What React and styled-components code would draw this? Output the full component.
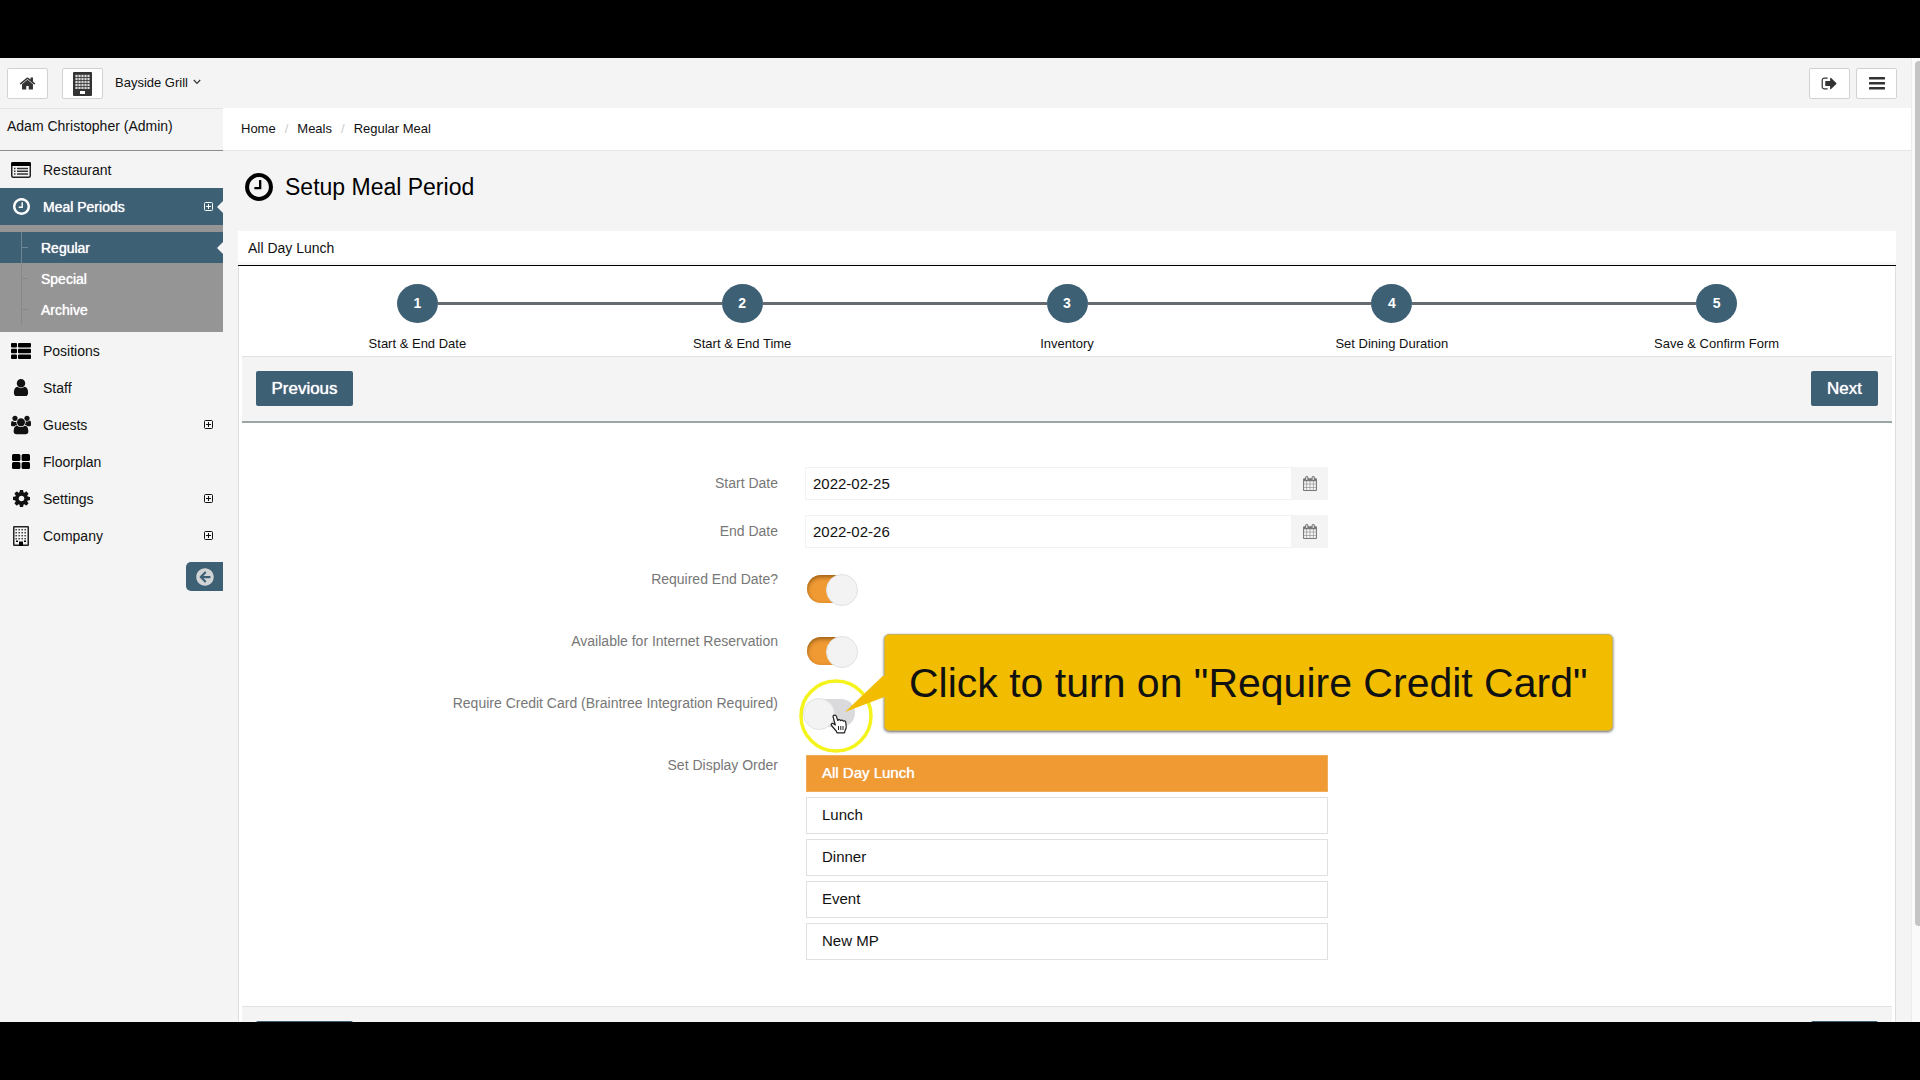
import { useState } from 'react'
import styled, { createGlobalStyle, css } from 'styled-components'
import { FaArrowCircleLeft } from 'react-icons/fa'

const steel = '#3e6075'
const orange = '#ef9a33'
const page = '#f4f4f4'

const GlobalStyle = createGlobalStyle`
  * {
    box-sizing: border-box;
  }
  body {
    margin: 0;
    background: #000;
    color: #111;
    font-family: 'Liberation Sans', Arial, sans-serif;
    font-size: 14px;
    line-height: 18px;
  }
  a {
    color: inherit;
    text-decoration: none;
  }
  button, input {
    font-family: inherit;
    color: inherit;
  }
  ul, ol {
    list-style: none;
    margin: 0;
    padding: 0;
  }
  svg {
    display: block;
    flex: none;
  }
`

const Stage = styled.div`
  height: 100vh;
  padding: 58px 0;
`

const Viewport = styled.div`
  display: flex;
  height: 100%;
  overflow: hidden;
  background: ${page};
`

const Page = styled.div`
  flex: 1;
  min-width: 0;
`

const ScrollTrack = styled.div`
  width: 9px;
  padding: 3px 0 0 3px;
  background: #fafafa;
  border-left: 1px solid #ececec;
`

const ScrollThumb = styled.div`
  height: 90%;
  border-radius: 4px 0 0 4px;
  background: #c4c4c4;
`

/* top bar */
const TopBar = styled.header`
  display: flex;
  align-items: flex-start;
  height: 50px;
  padding: 10px 14px 0 7px;
`

const BarButton = styled.button`
  display: flex;
  align-items: center;
  justify-content: center;
  width: 41px;
  height: 31px;
  padding: 0;
  color: #333;
  background: #fff;
  border: 1px solid #d2d2d2;
  border-radius: 2px;
`

const BarLeft = styled.div`
  display: flex;
  flex: 1;
  gap: 14px;
`

const BarRight = styled.div`
  display: flex;
  gap: 6px;
`

const PlaceButton = styled.button`
  display: flex;
  align-items: center;
  gap: 5px;
  height: 28px;
  padding: 0;
  border: 0;
  background: none;
  font-size: 13px;
  margin-left: -2px;
`

const Body = styled.div`
  display: flex;
`

/* sidebar */
const Sidebar = styled.aside`
  width: 223px;
  flex: none;
`

const UserName = styled.div`
  height: 43px;
  padding: 8px 7px;
  border-top: 1px solid #e4e4e4;
  border-bottom: 1px solid #8c8c8c;
`

const notch = css`
  &::after {
    content: '';
    position: absolute;
    right: 0;
    top: 50%;
    margin-top: -6px;
    border: 6px solid transparent;
    border-left-width: 0;
    border-right-color: ${page};
  }
`

const NavLink = styled.a`
  position: relative;
  display: flex;
  align-items: center;
  gap: 12px;
  height: 37px;
  padding: 0 10px 0 11px;
  ${p => p.$active && css`
    color: #fff;
    background: ${steel};
    text-shadow: 0 0 1px #fff;
    ${notch}
  `}
`

const NavIcon = styled.span`
  display: flex;
  justify-content: center;
  width: 20px;
`

const NavText = styled.span`
  flex: 1;
`

const SubNav = styled.ul`
  padding: 7px 0;
  color: #fff;
  background: #959595;
`

const SubLink = styled.a`
  position: relative;
  display: flex;
  align-items: center;
  gap: 13px;
  height: 31px;
  padding-left: 21px;
  text-shadow: 0 0 1px #fff;
  ${p => p.$active && css`
    background: ${steel};
    ${notch}
  `}
`

const Branch = styled.span`
  display: flex;
  align-items: center;
  width: 7px;
  height: 31px;
  border-left: 1px solid ${p => (p.$active ? '#6f8795' : '#888')};
  &::before {
    content: '';
    width: 6px;
    height: 1px;
    background: ${p => (p.$active ? '#6f8795' : '#888')};
  }
`

const CollapseButton = styled.button`
  display: flex;
  align-items: center;
  justify-content: center;
  width: 37px;
  height: 29px;
  margin: 8px 0 0 auto;
  padding: 0;
  border: 0;
  border-radius: 5px 0 0 5px;
  color: #d2d4d6;
  background: ${steel};
`

/* content */
const Main = styled.main`
  flex: 1;
  min-width: 0;
`

const Breadcrumb = styled.nav`
  display: flex;
  gap: 9px;
  height: 43px;
  padding: 12px 18px;
  font-size: 13px;
  background: #fff;
  border-bottom: 1px solid #e6e6e6;
  span {
    color: #ccc;
  }
`

const Heading = styled.h1`
  display: flex;
  align-items: center;
  gap: 12px;
  height: 80px;
  margin: 0;
  padding: 0 22px 8px;
  font-size: 23px;
  font-weight: 400;
  color: #000;
`

const Panel = styled.section`
  margin: 0 15px;
`

const PanelTitle = styled.h2`
  height: 35px;
  margin: 0;
  padding: 8px 10px;
  font-size: 14px;
  font-weight: 400;
  background: linear-gradient(#fff 31px, #f7f7f7 31px);
  border-bottom: 1px solid #000;
`

const PanelBody = styled.div`
  padding: 0 3px;
  background: #fff;
  border: solid #dedede;
  border-width: 0 1px;
`

const Steps = styled.ol`
  display: flex;
  padding: 18px 13px 3px;
`

const Step = styled.li`
  flex: 1;
  text-align: center;
  font-size: 13px;
`

const StepTrack = styled.div`
  display: flex;
  align-items: center;
  margin-bottom: 12px;
`

const StepLine = styled.span`
  flex: 1;
  height: 3px;
  background: ${p => (p.$hidden ? 'transparent' : '#666b72')};
`

const StepDot = styled.span`
  width: 41px;
  height: 39px;
  line-height: 39px;
  border-radius: 50%;
  color: #fff;
  background: ${steel};
  font-size: 14px;
  font-weight: 700;
`

const Actions = styled.div`
  display: flex;
  justify-content: space-between;
  padding: 14px;
  background: ${page};
  border-top: 1px solid #e2e2e2;
  border-bottom: 2px solid #9aa6a6;
`

const ActionButton = styled.button`
  min-width: ${p => (p.$wide ? '97px' : '67px')};
  height: 35px;
  margin-bottom: 1px;
  padding: 0 15px;
  border: 0;
  border-radius: 2px;
  color: #fff;
  background: ${steel};
  font-size: 17px;
  text-shadow: 0 0 1px #fff;
`

const Form = styled.form`
  padding: 44px 0 46px;
`

const Row = styled.div`
  display: grid;
  grid-template-columns: 1fr 1fr 1fr;
  min-height: ${p => (p.$tall ? '62px' : '48px')};
`

const Label = styled.label`
  padding: 7px 14px 0 0;
  text-align: right;
  color: #777;
`

const DateField = styled.div`
  display: flex;
  height: 33px;
  margin: 0 14px 0 13px;
`

const DateInput = styled.input`
  flex: 1;
  min-width: 0;
  padding: 0 7px;
  border: 1px solid #f3f3f3;
  background: #fff;
  font-size: 15px;
`

const DateButton = styled.button`
  display: flex;
  align-items: center;
  justify-content: center;
  width: 36px;
  padding: 0;
  border: 0;
  color: #777;
  background: ${page};
`

const SwitchCell = styled.div`
  padding: 12px 0 0 15px;
`

const SwitchAnchor = styled.div`
  position: relative;
  width: 50px;
  height: 28px;
`

const Switch = styled.input.attrs({ type: 'checkbox' })`
  appearance: none;
  display: block;
  width: 48px;
  height: 28px;
  margin: 0;
  border-radius: 14px;
  background: #dadadc;
  &:checked {
    background: ${orange};
    box-shadow: inset 0 2px 4px rgba(90, 50, 0, 0.6);
  }
  &::before {
    content: '';
    position: absolute;
    top: -1px;
    left: -4px;
    width: 30px;
    height: 30px;
    border: 1px solid #e2e2e2;
    border-radius: 50%;
    background: #f3f3f3;
  }
  &:checked::before {
    left: 19px;
  }
`

const OrderList = styled.ul`
  display: flex;
  flex-direction: column;
  gap: 5px;
  padding: 6px 14px 0 14px;
`

const OrderItem = styled.li`
  height: 37px;
  padding: 8px 15px;
  font-size: 15px;
  border: 1px solid #e0e0e0;
  background: #fff;
  ${p => p.$active && css`
    color: #fff;
    background: ${orange};
    border-color: #f0ac5a;
    text-shadow: 0 0 1px #fff;
  `}
`

/* hint shown over the form */
const Callout = styled.div`
  position: absolute;
  z-index: 2;
  top: -65px;
  left: 77px;
  height: 97px;
  padding: 0 24px;
  line-height: 97px;
  white-space: nowrap;
  font-size: 41px;
  color: #111;
  background: #f2bd00;
  border: 1px solid #c9b25a;
  border-radius: 5px;
  box-shadow: 0 1px 3px rgba(0, 0, 0, 0.6);
`

const Pointer = styled.svg`
  position: absolute;
  z-index: 3;
  top: -23px;
  left: -10px;
  pointer-events: none;
`

const Fa = ({ d, size, box = '0 0 1792 1792', width }) => (
  <svg viewBox={box} width={width || size} height={size} fill="currentColor" aria-hidden="true"><path d={d} /></svg>
)

const homePath = 'M1472 992v480q0 26-19 45t-45 19h-384v-384h-256v384h-384q-26 0-45-19t-19-45v-480q0-1 .5-3t.5-3l575-474 575 474q1 2 1 6zm223-69l-62 74q-8 9-21 11h-3q-13 0-21-7l-692-577-692 577q-12 8-24 7-13-2-21-11l-62-74q-8-10-7-23.5t11-21.5l719-599q32-26 76-26t76 26l244 204v-195q0-14 9-23t23-9h192q14 0 23 9t9 23v408l219 182q10 8 11 21.5t-7 23.5z'
const signOutPath = 'M704 1440q0 4 1 20t.5 26.5-3 23.5-10 19.5-20.5 6.5h-320q-119 0-203.5-84.5t-84.5-203.5v-704q0-119 84.5-203.5t203.5-84.5h320q13 0 22.5 9.5t9.5 22.5q0 4 1 20t.5 26.5-3 23.5-10 19.5-20.5 6.5h-320q-66 0-113 47t-47 113v704q0 66 47 113t113 47h312l11.5 1 11.5 3 8 5.5 7 9 2 13.5zm928-544q0 26-19 45l-544 544q-19 19-45 19t-45-19-19-45v-288h-448q-26 0-45-19t-19-45v-384q0-26 19-45t45-19h448v-288q0-26 19-45t45-19 45 19l544 544q19 19 19 45z'
const clockPath = 'M1024 544v448q0 14-9 23t-23 9h-320q-14 0-23-9t-9-23v-64q0-14 9-23t23-9h224v-352q0-14 9-23t23-9h64q14 0 23 9t9 23zm416 352q0-148-73-273t-198-198-273-73-273 73-198 198-73 273 73 273 198 198 273 73 273-73 198-198 73-273zm224 0q0 209-103 385.5t-279.5 279.5-385.5 103-385.5-103-279.5-279.5-103-385.5 103-385.5 279.5-279.5 385.5-103 385.5 103 279.5 279.5 103 385.5z'
const userPath = 'M1536 1399q0 109-62.5 187t-150.5 78h-854q-88 0-150.5-78t-62.5-187q0-85 8.5-160.5t31.5-152 58.5-131 94-89 134.5-34.5q131 128 313 128t313-128q76 0 134.5 34.5t94 89 58.5 131 31.5 152 8.5 160.5zm-256-887q0 159-112.5 271.5t-271.5 112.5-271.5-112.5-112.5-271.5 112.5-271.5 271.5-112.5 271.5 112.5 112.5 271.5z'
const usersPath = 'M657 896q-162 5-265 128h-134q-82 0-138-40.5t-56-118.5q0-353 124-353 6 0 43.5 21t97.5 42.5 119 21.5q67 0 133-23-5 37-5 66 0 159 90 294zm1071 637q0 120-73 189.5t-194 69.5h-874q-121 0-194-69.5t-73-189.5q0-53 3.5-103.5t14-109 26.5-108.5 43-97.5 62-81 85.5-53.5 111.5-20q10 0 43 21.5t73 48 107 48 135 21.5 135-21.5 107-48 73-48 43-21.5q61 0 111.5 20t85.5 53.5 62 81 43 97.5 26.5 108.5 14 109 3.5 103.5zm-1024-1277q0 106-75 181t-181 75-181-75-75-181 75-181 181-75 181 75 75 181zm704 384q0 159-112.5 271.5t-271.5 112.5-271.5-112.5-112.5-271.5 112.5-271.5 271.5-112.5 271.5 112.5 112.5 271.5zm576 225q0 78-56 118.5t-138 40.5h-134q-103-123-265-128 90-135 90-294 0-29-5-66 66 23 133 23 59 0 119-21.5t97.5-42.5 43.5-21q124 0 124 353zm-128-609q0 106-75 181t-181 75-181-75-75-181 75-181 181-75 181 75 75 181z'
const cogPath = 'M1152 896q0-106-75-181t-181-75-181 75-75 181 75 181 181 75 181-75 75-181zm512-109v222q0 12-8 23t-20 13l-185 28q-19 54-39 91 35 50 107 138 10 12 10 25t-9 23q-27 37-99 108t-94 71q-12 0-26-9l-138-108q-44 23-91 38-16 136-29 186-7 28-36 28h-222q-14 0-24.5-8.5t-11.5-21.5l-28-184q-49-16-90-37l-141 107q-10 9-25 9-14 0-25-11-126-114-165-168-7-10-7-23 0-12 8-23 15-21 51-66.5t54-70.5q-27-50-41-99l-183-27q-13-2-21-12.5t-8-23.5v-222q0-12 8-23t19-13l186-28q14-46 39-92-40-57-107-138-10-12-10-24 0-10 9-23 26-36 98.5-107.5t94.5-71.5q13 0 26 10l138 107q44-23 91-38 16-136 29-186 7-28 36-28h222q14 0 24.5 8.5t11.5 21.5l28 184q49 16 90 37l142-107q9-9 24-9 13 0 25 10 129 119 165 170 7 8 7 22 0 12-8 23-15 21-51 66.5t-54 70.5q26 50 41 98l183 28q13 2 21 12.5t8 23.5z'
const calendarPath = 'M192 1664h288v-288h-288v288zm352 0h320v-288h-320v288zm-352-352h288v-320h-288v320zm352 0h320v-320h-320v320zm-352-384h288v-288h-288v288zm736 736h320v-288h-320v288zm-384-736h320v-288h-320v288zm768 736h288v-288h-288v288zm-384-352h320v-320h-320v320zm-352-864v-288q0-13-9.5-22.5t-22.5-9.5h-64q-13 0-22.5 9.5t-9.5 22.5v288q0 13 9.5 22.5t22.5 9.5h64q13 0 22.5-9.5t9.5-22.5zm736 864h288v-320h-288v320zm-384-384h320v-288h-320v288zm384 0h288v-288h-288v288zm32-480v-288q0-13-9.5-22.5t-22.5-9.5h-64q-13 0-22.5 9.5t-9.5 22.5v288q0 13 9.5 22.5t22.5 9.5h64q13 0 22.5-9.5t9.5-22.5zm384-64v1280q0 52-38 90t-90 38h-1408q-52 0-90-38t-38-90v-1280q0-52 38-90t90-38h128v-96q0-66 47-113t113-47h64q66 0 113 47t47 113v96h384v-96q0-66 47-113t113-47h64q66 0 113 47t47 113v96h128q52 0 90 38t38 90z'

const ClockIcon = ({ size }) => <Fa d={clockPath} size={size} box="128 128 1536 1536" />

const BarsIcon = () => (
  <svg width="16" height="14" viewBox="0 0 16 14" fill="currentColor" aria-hidden="true">
    <rect y="0" width="16" height="2.4" rx="0.5" />
    <rect y="5" width="16" height="2.4" rx="0.5" />
    <rect y="10" width="16" height="2.4" rx="0.5" />
  </svg>
)

const ListAltIcon = () => (
  <svg width="20" height="16" viewBox="0 0 20 16" aria-hidden="true">
    <rect x="0.75" y="0.75" width="18.5" height="14.5" rx="1.5" fill="none" stroke="#222" strokeWidth="1.5" />
    <path d="M0 1.5Q0 0 1.5 0h17Q20 0 20 1.5V4H0z" fill="#000" />
    <path d="M3 6.5h1.5M3 9.2h1.5M3 12h1.5M6 6.5h11M6 9.2h11M6 12h11" stroke="#333" strokeWidth="1.5" />
  </svg>
)

const ThListIcon = () => (
  <svg width="20" height="16" viewBox="0 0 20 16" aria-hidden="true">
    {[0, 5.7, 11.4].map(y => (
      <g key={y}>
        <rect y={y} width="6" height="4.6" rx="1" />
        <rect x="7" y={y} width="13" height="4.6" rx="1" />
      </g>
    ))}
  </svg>
)

const ThLargeIcon = () => (
  <svg width="18" height="15" viewBox="0 0 18 15" aria-hidden="true">
    <rect width="8.4" height="7" rx="1.5" />
    <rect x="9.6" width="8.4" height="7" rx="1.5" />
    <rect y="8" width="8.4" height="7" rx="1.5" />
    <rect x="9.6" y="8" width="8.4" height="7" rx="1.5" />
  </svg>
)

const windows = [3, 6, 9, 12]

const BuildingSolid = () => (
  <svg width="19" height="24" viewBox="0 0 19 24" aria-hidden="true">
    <rect width="19" height="24" rx="1" fill="#333" />
    {[3, 6, 9, 12, 15].map(y => [3, 6, 9, 12, 15].map(x => (
      <rect key={`${x}-${y}`} x={x - 0.6} y={y - 0.2} width="2.2" height="2.2" fill="#d8d8d8" />
    )))}
    <rect x="7" y="19" width="5" height="3" fill="#fff" />
  </svg>
)

const BuildingOutline = () => (
  <svg width="16" height="20" viewBox="0 0 16 20" aria-hidden="true">
    <rect x="0.75" y="0.75" width="14.5" height="18.5" rx="0.5" fill="none" stroke="#222" strokeWidth="1.5" />
    {[3, 6, 9, 12].map(y => windows.map(x => (
      <rect key={`${x}-${y}`} x={x - 0.6} y={y} width="1.6" height="1.4" fill="#444" />
    )))}
    <path d="M3 14.5h2v1.5H3zM11 14.5h2v1.5h-2zM6 15.5h4V20H6z" />
  </svg>
)

const PlusSquare = () => (
  <svg width="9" height="9" viewBox="0 0 9 9" fill="none" stroke="currentColor" aria-hidden="true">
    <rect x="0.5" y="0.5" width="8" height="8" rx="1" />
    <path d="M4.5 2v5M2 4.5h5" />
  </svg>
)

const Chevron = () => (
  <svg width="8" height="6" viewBox="0 0 8 6" fill="none" stroke="#333" strokeWidth="1.2" aria-hidden="true">
    <path d="M0.8 1L4 4.4L7.2 1" />
  </svg>
)

const topItems = [
  { text: 'Restaurant', icon: <ListAltIcon /> },
  { text: 'Meal Periods', icon: <ClockIcon size={17} />, more: true, active: true },
]

const subItems = ['Regular', 'Special', 'Archive']

const bottomItems = [
  { text: 'Positions', icon: <ThListIcon /> },
  { text: 'Staff', icon: <Fa d={userPath} size={17} width={16} box="256 128 1280 1536" /> },
  { text: 'Guests', icon: <Fa d={usersPath} size={20} width={20} box="64 0 1920 1792" />, more: true },
  { text: 'Floorplan', icon: <ThLargeIcon /> },
  { text: 'Settings', icon: <Fa d={cogPath} size={17} box="128 128 1536 1536" />, more: true },
  { text: 'Company', icon: <BuildingOutline />, more: true },
]

const steps = ['Start & End Date', 'Start & End Time', 'Inventory', 'Set Dining Duration', 'Save & Confirm Form']
const order = ['All Day Lunch', 'Lunch', 'Dinner', 'Event', 'New MP']

const NavItem = ({ item }) => (
  <li>
    <NavLink href="#" $active={item.active}>
      <NavIcon>{item.icon}</NavIcon>
      <NavText>{item.text}</NavText>
      {item.more && <PlusSquare />}
    </NavLink>
  </li>
)

const DateRow = ({ id, label, value }) => (
  <Row>
    <Label htmlFor={id}>{label}</Label>
    <DateField>
      <DateInput id={id} type="text" defaultValue={value} />
      <DateButton type="button" aria-label={`Pick ${label}`}>
        <Fa d={calendarPath} size={15} width={14} box="64 0 1664 1792" />
      </DateButton>
    </DateField>
  </Row>
)

const SwitchRow = ({ id, label, initial, children }) => {
  const [on, setOn] = useState(initial)
  return (
    <Row $tall>
      <Label htmlFor={id}>{label}</Label>
      <SwitchCell>
        <SwitchAnchor>
          <Switch id={id} checked={on} onChange={() => setOn(!on)} />
          {children}
        </SwitchAnchor>
      </SwitchCell>
    </Row>
  )
}

export default function App() {
  return (
    <Stage>
      <GlobalStyle />
      <Viewport>
        <Page>
          <TopBar>
            <BarLeft>
              <BarButton aria-label="Home"><Fa d={homePath} size={17} /></BarButton>
              <BarButton aria-label="Building"><BuildingSolid /></BarButton>
              <PlaceButton>Bayside Grill <Chevron /></PlaceButton>
            </BarLeft>
            <BarRight>
              <BarButton aria-label="Sign out"><Fa d={signOutPath} size={17} /></BarButton>
              <BarButton aria-label="Menu"><BarsIcon /></BarButton>
            </BarRight>
          </TopBar>
          <Body>
            <Sidebar>
              <UserName>Adam Christopher (Admin)</UserName>
              <ul>{topItems.map(item => <NavItem key={item.text} item={item} />)}</ul>
              <SubNav>
                {subItems.map((text, i) => (
                  <li key={text}>
                    <SubLink href="#" $active={i === 0}><Branch $active={i === 0} />{text}</SubLink>
                  </li>
                ))}
              </SubNav>
              <ul>{bottomItems.map(item => <NavItem key={item.text} item={item} />)}</ul>
              <CollapseButton aria-label="Collapse menu"><FaArrowCircleLeft size={18} /></CollapseButton>
            </Sidebar>
            <Main>
              <Breadcrumb>
                <a href="#">Home</a><span>/</span>
                <a href="#">Meals</a><span>/</span>
                <a href="#">Regular Meal</a>
              </Breadcrumb>
              <Heading><ClockIcon size={28} />Setup Meal Period</Heading>
              <Panel>
                <PanelTitle>All Day Lunch</PanelTitle>
                <PanelBody>
                  <Steps>
                    {steps.map((text, i) => (
                      <Step key={text}>
                        <StepTrack>
                          <StepLine $hidden={i === 0} />
                          <StepDot>{i + 1}</StepDot>
                          <StepLine $hidden={i === steps.length - 1} />
                        </StepTrack>
                        {text}
                      </Step>
                    ))}
                  </Steps>
                  <Actions>
                    <ActionButton type="button" $wide>Previous</ActionButton>
                    <ActionButton type="button">Next</ActionButton>
                  </Actions>
                  <Form>
                    <DateRow id="start" label="Start Date" value="2022-02-25" />
                    <DateRow id="end" label="End Date" value="2022-02-26" />
                    <SwitchRow id="need-end" label="Required End Date?" initial={true} />
                    <SwitchRow id="internet" label="Available for Internet Reservation" initial={true} />
                    <SwitchRow id="card" label="Require Credit Card (Braintree Integration Required)" initial={false}>
                      <Callout role="tooltip">Click to turn on "Require Credit Card"</Callout>
                      <Pointer width="90" height="80" viewBox="0 0 90 80" aria-hidden="true">
                        <circle cx="39" cy="40" r="35" fill="none" stroke="#f4f41c" strokeWidth="3.5" />
                        <path d="M90 -4L48 36L90 20z" fill="#f2bd00" />
                        {/* hand cursor */}
                        <path
                          d="M36 40.5c0-1.800 2.800-2 3.300-.3l1.500 4.300c.6-1.200 2.300-1 2.800.2.7-1 2.300-.7 2.600.5.9-.8 2.300-.3 2.500 1l.5 4c.2 2-.4 3.300-1.300 4.800l-.4 1.800h-7.500l-.8-1.800-4.700-5.500c-1-1.400.7-2.800 2-1.800l1.800 1.300z"
                          fill="#fff"
                          stroke="#222"
                          strokeWidth="1.200"
                          strokeLinejoin="round"
                        />
                        <path d="M41.500 50v4M43.800 50v4M46 50v4" stroke="#222" />
                      </Pointer>
                    </SwitchRow>
                    <Row>
                      <Label as="div" id="order">Set Display Order</Label>
                      <OrderList aria-labelledby="order">
                        {order.map((text, i) => <OrderItem key={text} $active={i === 0}>{text}</OrderItem>)}
                      </OrderList>
                    </Row>
                  </Form>
                  <Actions>
                    <ActionButton type="button" aria-label="Previous" $wide />
                    <ActionButton type="button" aria-label="Next" />
                  </Actions>
                </PanelBody>
              </Panel>
            </Main>
          </Body>
        </Page>
        <ScrollTrack><ScrollThumb /></ScrollTrack>
      </Viewport>
    </Stage>
  )
}
